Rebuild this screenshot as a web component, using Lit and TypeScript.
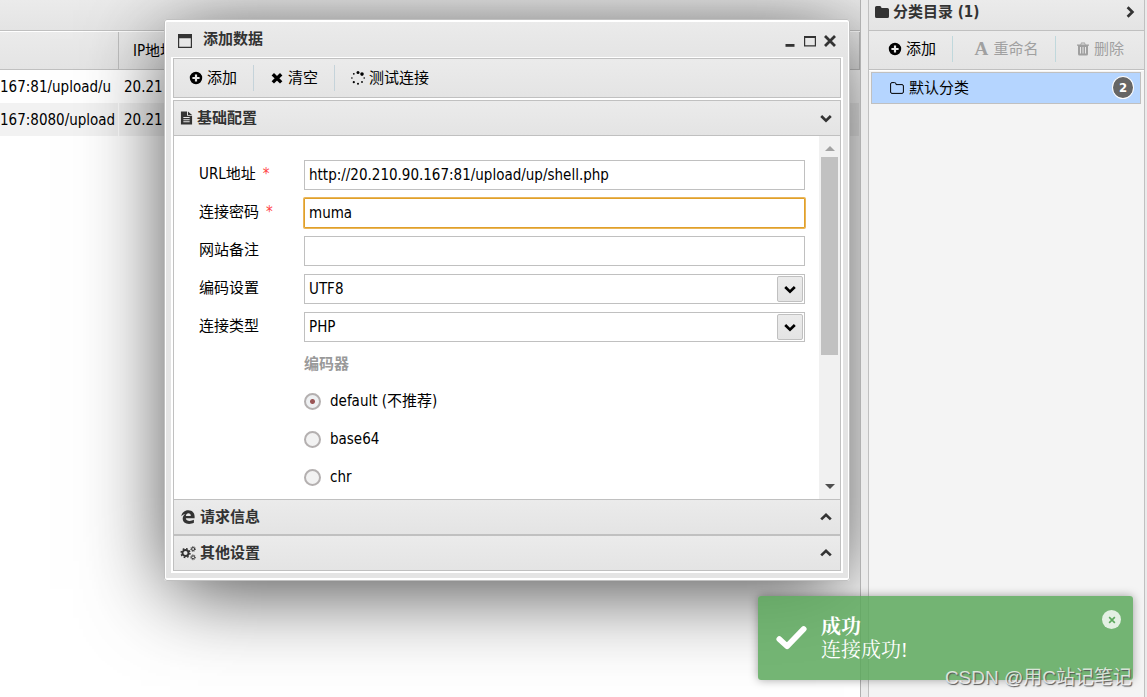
import { LitElement, html, css, svg } from "lit";
import { customElement, property } from "lit/decorators.js";

const paths: Record<string, unknown> = {
  plus: svg`<path fill-rule="evenodd" d="M7 .8a6.2 6.2 0 1 1 0 12.4A6.2 6.2 0 0 1 7 .8zM5.9 3.4v2.5H3.4v2.2h2.5v2.5h2.2V8.1h2.5V5.9H8.1V3.4z"/>`,
  times: svg`<path d="M2.8 3.2L11.2 11.4M11.2 3.2L2.8 11.4" fill="none" stroke="currentColor" stroke-width="3.4"/>`,
  close: svg`<path d="M2 2L12 12M12 2L2 12" fill="none" stroke="currentColor" stroke-width="2.8"/>`,
  spinner: svg`<circle cx="7" cy="1.4" r="1.5"/><circle cx="11" cy="3.1" r="1.8"/><circle cx="13.2" cy="7" r=".8"/><circle cx="11" cy="11" r=".9"/><circle cx="7" cy="12.8" r="1"/><circle cx="2.800" cy="11.2" r="1.1"/><circle cx=".9" cy="7" r=".8"/><circle cx="2.800" cy="2.800" r=".9"/>`,
  file: svg`<path fill-rule="evenodd" d="M1 0h6.6v4.6H13V14H1zM8.6 0L13 3.8H8.6zM3.6 6v1h6.8V6zm0 2.3v1h6.8v-1zm0 2.3v1h6.8v-1z"/>`,
  window: svg`<path fill-rule="evenodd" d="M0 0h14v14H0zM1.2 4.2v8.6h11.6V4.2z"/>`,
  minimize: svg`<path d="M2.5 10h9v2.8h-9z"/>`,
  maximize: svg`<path fill-rule="evenodd" d="M1 2h12v10.5H1zM2.2 4v7.3h9.6V4z"/>`,
  down: svg`<path d="M2.2 5L7 9.6 11.8 5" fill="none" stroke="currentColor" stroke-width="2.7"/>`,
  up: svg`<path d="M2.2 9.4L7 4.8 11.8 9.4" fill="none" stroke="currentColor" stroke-width="2.7"/>`,
  right: svg`<path d="M4.6 2.2L9.4 7 4.6 11.8" fill="none" stroke="currentColor" stroke-width="2.7"/>`,
  folder: svg`<path d="M0 2.6Q0 1 1.6 1h3.2q1.6 0 1.6 1.6v.4h6Q14 3 14 4.6v6.8q0 1.6-1.6 1.6H1.6Q0 13 0 11.4z"/>`,
  folderOpen: svg`<path d="M.6 3q0-1.4 1.4-1.4h2.6Q6 1.6 6 3v.6h6q1.4 0 1.4 1.4v6q0 1.4-1.4 1.4H2Q.6 12.400.6 11z" fill="none" stroke="currentColor" stroke-width="1"/>`,
  trash: svg`<path fill-rule="evenodd" d="M1 2.4h3.3l.9-1.8h3.6l.9 1.8H13v1.4h-1V12q0 1.600-1.400 1.600H3.400Q2 13.600 2 12V3.800H1zM5.600 1.600l-.4.8h3.600l-.4-.8zM4 5v6.500h1V5zm2.500 0v6.500h1V5zM9 5v6.500h1V5z"/>`,
  edge: svg`<path d="M.3 6.300C.9 2.500 3.500.2 7.300.2c4.200 0 6.300 3 6.300 6.100v1.900H4.800c.2 1.900 1.800 2.700 3.900 2.700 1.500 0 2.900-.4 4.200-1.100v3c-1.300.7-3 1.100-4.800 1.100-3.900 0-6.400-2-6.400-5.300 0-2.200 1-3.700 2.700-4.700C2.700 4.100 1.200 4.800.3 6.300zM4.900 5.900h4.900c0-1.700-.9-2.600-2.400-2.600-1.400 0-2.300 1-2.500 2.600z"/>`,
  cogs: svg`<g fill="none" stroke="currentColor"><circle cx="4.500" cy="7" r="3" stroke-width="1.900"/><circle cx="4.500" cy="7" r="4.400" stroke-width="1.500" stroke-dasharray="1.700 1.756"/><circle cx="12.100" cy="3" r="1.500" stroke-width="1"/><circle cx="12.100" cy="3" r="2.400" stroke-width=".9" stroke-dasharray="1 .885"/><circle cx="12.100" cy="11.300" r="1.500" stroke-width="1"/><circle cx="12.100" cy="11.300" r="2.400" stroke-width=".9" stroke-dasharray="1 .885"/></g>`,
  check: svg`<path d="M1.500 7.300L5 10.500 12.500 2.700" fill="none" stroke="currentColor" stroke-width="2.600" stroke-linecap="round" stroke-linejoin="round"/>`,
};

@customElement("ui-icon")
export class UiIcon extends LitElement {
  static styles = css`
    :host { display: inline-flex; flex: none; width: 14px; height: 14px; }
    .glyph { width: 100%; height: 100%; fill: currentColor; overflow: visible; }
  `;
  @property() name = "";
  render() {
    return html`<svg class="glyph" viewBox="0 0 14 14" aria-hidden="true">${paths[this.name]}</svg>`;
  }
}

@customElement("app-root")
export class AppRoot extends LitElement {
  static styles = css`
    * { box-sizing: border-box; }
    :host {
      display: flex;
      position: relative;
      height: 100vh;
      overflow: hidden;
      background: #ebebeb;
      color: #000;
      font: 15px/20px "DejaVu Sans Condensed", "Noto Sans CJK SC", sans-serif;
    }
    button, input, select { font: inherit; color: inherit; margin: 0; padding: 0; }
    button { display: inline-flex; align-items: center; justify-content: center; border: 0; background: none; white-space: nowrap; }

    .desktop {
      position: relative;
      flex: 1;
      min-width: 0;
      overflow: hidden;
      background: #fff;
      border-right: 1px solid #b0b0b0;
    }
    .caption { height: 31px; background: linear-gradient(#ebebeb, #e4e4e4); border-bottom: 1px solid #c0c0c0; }
    .grid { width: 100%; margin-top: 1px; border-collapse: separate; border-spacing: 0; table-layout: fixed; }
    .grid th {
      height: 38px;
      padding: 0 14px;
      text-align: left;
      font-weight: 400;
      background: linear-gradient(#ebebeb, #e4e4e4);
      border-bottom: 1px solid #c0c0c0;
      border-right: 1px solid #c0c0c0;
    }
    .grid td { height: 33px; padding: 0 5px; white-space: nowrap; overflow: hidden; border-right: 1px solid #fff; }
    .grid .address { width: 119px; padding: 0; }
    .grid .striped td { background: #f2f2f2; }

    .window {
      position: absolute;
      left: 164px;
      top: 19px;
      width: 686px;
      padding: 0 6px 7px;
      border: 1px solid #c0c0c0;
      border-radius: 3px;
      box-shadow: inset 0 0 0 1px #fff, inset 0 -2px #fff, inset 0 2px #fff, 0 14px 80px -6px rgba(0, 0, 0, 0.75);
      background: linear-gradient(#ebebeb, #e4e4e4 40px);
    }
    .titlebar { display: flex; align-items: center; height: 37px; padding: 5px 6px 0 7px; color: #333; }
    .title { flex: 1; margin: 0 0 4px 11px; font-size: 15px; font-weight: 700; }
    .controls { display: flex; gap: 6px; }
    .frame { border: 2px solid #fff; border-top-width: 1px; background: #fff; }
    .toolbar {
      display: flex;
      align-items: center;
      height: 40px;
      padding-bottom: 1px;
      background: linear-gradient(#ebebeb, #e4e4e4);
      border: 1px solid #c0c0c0;
    }
    .tool { gap: 4px; height: 26px; padding: 0 16px; border-left: 1px solid #c5d3da; }
    .tool:first-child { border-left: 0; padding-left: 15px; }
    .accordion { margin-top: 2px; border: solid #c0c0c0; border-width: 0 1px; }
    .section {
      display: flex;
      align-items: center;
      height: 36px;
      margin: 0;
      padding: 0 7px 1px 6px;
      background: linear-gradient(#ebebeb, #e4e4e4);
      border: solid #c0c0c0;
      border-width: 1px 0;
      color: #333;
      font-size: 15px;
      font-weight: 700;
    }
    .section-name { flex: 1; margin-left: 4px; }
    .section-icon { width: 16px; }
    .section-icon.narrow { width: 13px; }
    .body { display: flex; height: 363px; overflow: hidden; }
    .form { display: grid; grid-template-columns: 105px 1fr; grid-auto-rows: 38px; align-items: center; flex: 1; padding: 20px 14px 0 25px; }
    .label { padding-bottom: 2px; }
    .star { color: #f44; margin-left: 7px; }
    .field { position: relative; display: flex; }
    .box { width: 100%; height: 30px; padding: 0 4px; border: 1px solid #c0c0c0; border-radius: 0; background: #fff; outline: none; appearance: none; }
    .box.active { border-color: #e0a02a; box-shadow: 0 0 0 1px #eab65a; border-radius: 1px; }
    .drop {
      position: absolute;
      right: 2px;
      top: 2px;
      display: flex;
      align-items: center;
      justify-content: center;
      width: 26px;
      height: 26px;
      border: 1px solid #c0c0c0;
      border-radius: 2px;
      background: linear-gradient(#ebebeb, #e4e4e4);
      pointer-events: none;
    }
    .group { grid-column: 2; padding-bottom: 2px; color: #999; font-weight: 700; }
    .choice { grid-column: 2; display: flex; align-items: center; gap: 9px; padding-bottom: 4px; }
    .radio { appearance: none; width: 17px; height: 17px; border: 2px solid #b4b0b0; border-radius: 50%; background: #f2f2f2; }
    .radio:checked { background: radial-gradient(circle, #9a5555 0 2px, #eef0f2 3px); }
    .scrollbar { display: flex; flex-direction: column; align-items: center; width: 21px; padding: 10px 0; background: #f1f1f1; gap: 6px; }
    .arrow { border: solid transparent; border-width: 0 5px; }
    .arrow.top { border-bottom: 5px solid #a3a3a3; }
    .arrow.bottom { margin-top: auto; border-top: 5px solid #505050; }
    .thumb { width: 17px; height: 198px; background: #c1c1c1; }

    .sidebar {
      width: 277px;
      margin: 0 2px 0 7px;
      display: flex;
      flex-direction: column;
      background: #f4f4f4;
      border: solid #c0c0c0;
      border-width: 0 1px;
    }
    .side-title {
      display: flex;
      align-items: center;
      height: 31px;
      margin: 0;
      padding: 0 7px 6px 6px;
      background: linear-gradient(#ebebeb, #e4e4e4);
      border-bottom: 1px solid #c0c0c0;
      color: #333;
      font-size: 15px;
      font-weight: 700;
    }
    .side-tools {
      display: flex;
      align-items: center;
      justify-content: space-between;
      height: 39px;
      padding-bottom: 2px;
      background: linear-gradient(#ebebeb, #e4e4e4);
      border-bottom: 1px solid #c0c0c0;
      box-shadow: 0 1px #fff;
    }
    .side-tools .tool { padding: 0 20px; border-color: #c0d8dc; }
    .side-tools .tool:first-child { padding: 0 16px 0 19px; }
    .side-tools .tool:nth-child(2) { padding: 0 16px 0 20px; }
    .tool:disabled { color: #a0a0a0; }
    .letter { width: 16px; font: bold 19px/20px "Liberation Serif", serif; }
    .item {
      display: flex;
      align-items: center;
      gap: 5px;
      height: 32px;
      margin: 2px 3px 0 2px;
      padding: 0 6px 1px 18px;
      background: #b5d5ff;
      border: 1px solid #c0c0c0;
      color: #000;
      text-decoration: none;
    }
    .badge {
      display: flex;
      align-items: center;
      justify-content: center;
      width: 22px;
      height: 23px;
      margin-left: auto;
      border: 1px solid #fff;
      border-radius: 50%;
      background: #666;
      color: #fff;
      font-size: 13px;
      font-weight: 700;
    }

    .toast {
      position: absolute;
      right: 14px;
      bottom: 17px;
      display: flex;
      align-items: center;
      width: 375px;
      height: 84px;
      padding: 0 12px 0 18px;
      gap: 14px;
      border-radius: 3px;
      background: rgba(92, 168, 92, 0.85);
      box-shadow: 0 0 10px rgba(0, 0, 0, 0.35);
      color: #fff;
      font-size: 20px;
      line-height: 23px;
    }
    .toast-icon { width: 31px; height: 31px; }
    .toast-text { flex: 1; padding-top: 1px; font-family: "Liberation Serif", "Noto Serif CJK SC", "Noto Sans CJK SC", serif; }
    .toast-text p { margin: 0; }
    .toast-text .toast-title { font-weight: 700; }
    .dismiss { align-self: flex-start; width: 19px; height: 19px; margin-top: 14px; border-radius: 50%; background: rgba(255, 255, 255, 0.8); color: #5ca85c; }
    .dismiss-icon { width: 8px; height: 8px; }
    .watermark {
      position: absolute;
      right: 15px;
      bottom: 6px;
      color: rgba(255, 255, 255, 0.75);
      font: 19px/26px "Liberation Sans", "Noto Sans CJK SC", sans-serif;
      text-shadow: 1px 1px 1px #555;
    }
  `;

  private field(id: string, label: string, value: string, required = false, active = false) {
    return html`
      <label class="label" for=${id}>${label}${required ? html`<span class="star">*</span>` : ""}</label>
      <div class="field"><input id=${id} class=${active ? "box active" : "box"} type="text" .value=${value} /></div>`;
  }

  private choose(id: string, label: string, value: string) {
    return html`
      <label class="label" for=${id}>${label}</label>
      <div class="field">
        <select id=${id} class="box"><option>${value}</option></select>
        <span class="drop"><ui-icon name="down"></ui-icon></span>
      </div>`;
  }

  private section(icon: string, name: string, chevron: string) {
    const size = icon === "file" ? "section-icon narrow" : "section-icon";
    return html`<h3 class="section"><ui-icon class=${size} name=${icon}></ui-icon><span class="section-name">${name}</span><ui-icon name=${chevron}></ui-icon></h3>`;
  }

  render() {
    return html`
      <main class="desktop">
        <div class="caption"></div>
        <table class="grid">
          <thead><tr><th class="address"></th><th>IP地址</th></tr></thead>
          <tbody>
            <tr><td class="address">167:81/upload/u</td><td>20.21</td></tr>
            <tr class="striped"><td class="address">167:8080/upload</td><td>20.21</td></tr>
          </tbody>
        </table>

        <section class="window" role="dialog" aria-label="添加数据">
          <header class="titlebar">
            <ui-icon name="window"></ui-icon>
            <h2 class="title">添加数据</h2>
            <div class="controls">
              <button aria-label="最小化"><ui-icon name="minimize"></ui-icon></button>
              <button aria-label="最大化"><ui-icon name="maximize"></ui-icon></button>
              <button aria-label="关闭"><ui-icon name="close"></ui-icon></button>
            </div>
          </header>
          <div class="frame">
            <div class="toolbar">
              <button class="tool"><ui-icon name="plus"></ui-icon>添加</button>
              <button class="tool"><ui-icon name="times"></ui-icon>清空</button>
              <button class="tool"><ui-icon name="spinner"></ui-icon>测试连接</button>
            </div>
            <div class="accordion">
              ${this.section("file", "基础配置", "down")}
              <div class="body">
                <form class="form">
                  ${this.field("url", "URL地址", "http://20.210.90.167:81/upload/up/shell.php", true)}
                  ${this.field("password", "连接密码", "muma", true, true)}
                  ${this.field("remark", "网站备注", "")}
                  ${this.choose("encoding", "编码设置", "UTF8")}
                  ${this.choose("type", "连接类型", "PHP")}
                  <div class="group">编码器</div>
                  <label class="choice"><input class="radio" type="radio" name="encoder" checked />default (不推荐)</label>
                  <label class="choice"><input class="radio" type="radio" name="encoder" />base64</label>
                  <label class="choice"><input class="radio" type="radio" name="encoder" />chr</label>
                </form>
                <div class="scrollbar"><span class="arrow top"></span><span class="thumb"></span><span class="arrow bottom"></span></div>
              </div>
              ${this.section("edge", "请求信息", "up")}
              ${this.section("cogs", "其他设置", "up")}
            </div>
          </div>
        </section>
      </main>

      <aside class="sidebar">
        <h2 class="side-title"><ui-icon name="folder"></ui-icon><span class="section-name">分类目录 (1)</span><ui-icon name="right"></ui-icon></h2>
        <div class="side-tools">
          <button class="tool"><ui-icon name="plus"></ui-icon>添加</button>
          <button class="tool" disabled><span class="letter">A</span>重命名</button>
          <button class="tool" disabled><ui-icon name="trash"></ui-icon>删除</button>
        </div>
        <a class="item" href="#"><ui-icon name="folderOpen"></ui-icon>默认分类<span class="badge">2</span></a>
      </aside>

      <div class="toast" role="status">
        <ui-icon class="toast-icon" name="check"></ui-icon>
        <div class="toast-text"><p class="toast-title">成功</p><p>连接成功!</p></div>
        <button class="dismiss" aria-label="关闭通知"><ui-icon class="dismiss-icon" name="close"></ui-icon></button>
      </div>
      <div class="watermark">CSDN @用C站记笔记</div>
    `;
  }
}
